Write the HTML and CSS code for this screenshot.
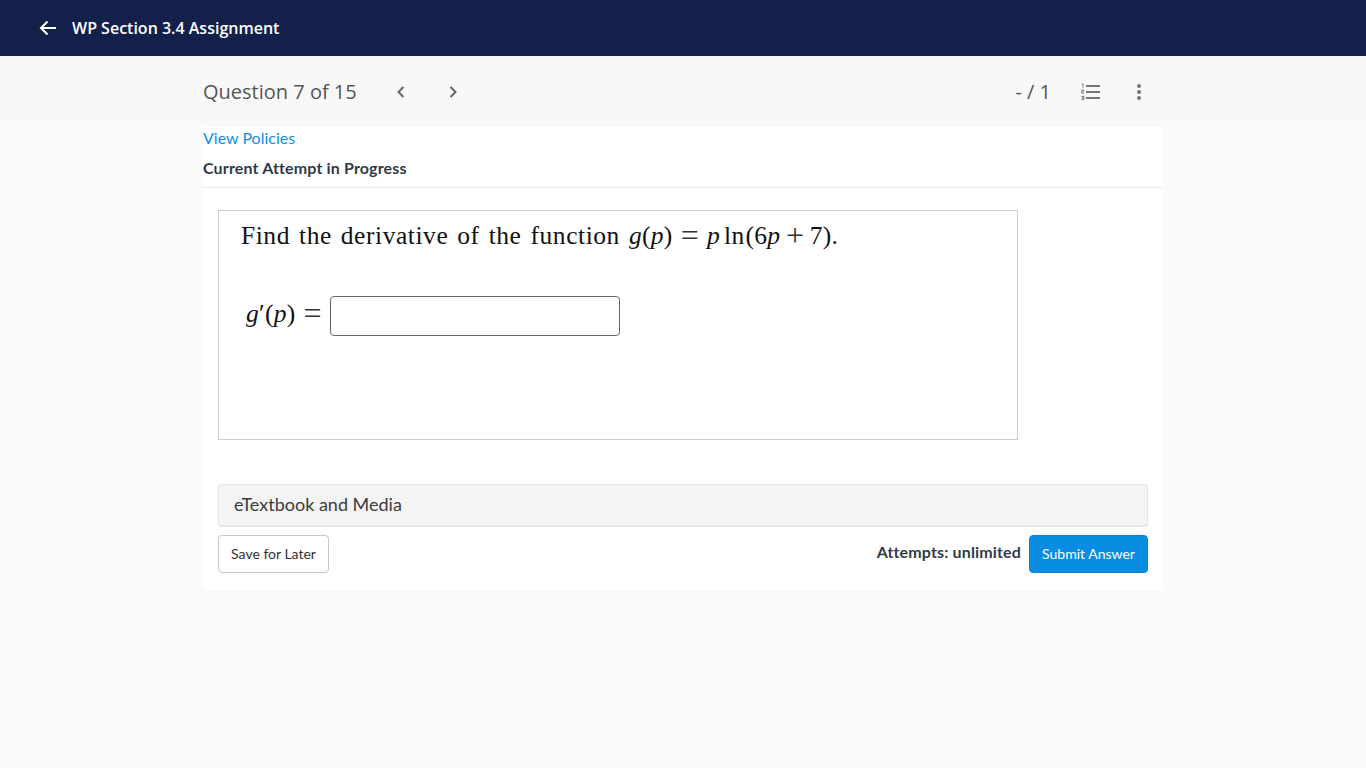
FILE: index.html
```html
<html lang="en">
<head>
  <meta charset="UTF-8">
  <meta name="viewport" content="width=device-width, initial-scale=1.0">
  <title>WP Section 3.4 Assignment</title>
  <link rel="stylesheet" href="styles.css">
</head>
<body>
  <div class="topbar">
    <svg class="backarrow" width="18" height="16" viewBox="0 0 18 16"><path d="M17 8H2M8.5 1.5L2 8l6.5 6.5" fill="none" stroke="#fff" stroke-width="2"/></svg>
    <div class="toptitle">WP Section 3.4 Assignment</div>
  </div>
  <div class="subbar">
    <div class="subinner">
      <div class="qcount">Question 7 of 15</div>
      <svg class="prev" width="10" height="14" viewBox="0 0 10 14"><path d="M7.5 2L2.5 7l5 5" fill="none" stroke="#666" stroke-width="2"/></svg>
      <svg class="next" width="10" height="14" viewBox="0 0 10 14"><path d="M2.5 2l5 5-5 5" fill="none" stroke="#666" stroke-width="2"/></svg>
      <div class="score">- / 1</div>
      <svg class="listicon" width="20" height="18" viewBox="0 0 20 18">
        <path d="M5 3h14M5 9h14M5 15h14" stroke="#757575" stroke-width="2"/>
        <path d="M.6 1.2l1.4-.6v4M.2 7h2.6v1.6H.6v1.6h2.4M.2 13.4h2.8v1.4H1.2h1.8v1.6H.2" fill="none" stroke="#757575" stroke-width=".9"/>
      </svg>
      <svg class="moreicon" width="6" height="18" viewBox="0 0 6 18"><circle cx="3" cy="3" r="2" fill="#757575"/><circle cx="3" cy="9" r="2" fill="#757575"/><circle cx="3" cy="15" r="2" fill="#757575"/></svg>
    </div>
  </div>
  <div class="card">
    <a class="policies" href="#">View Policies</a>
    <div class="attempt">Current Attempt in Progress</div>
    <div class="content">
      <div class="qbox">
        <div class="qtext">Find the derivative of the function <span class="math"><i>g</i>(<i>p</i>)<span class="rel">=</span><i>p</i><span class="fn">ln</span>(6<i>p</i><span class="rel small">+</span>7).</span></div>
        <div class="answer">
          <div class="answerlabel"><span class="math"><i>g</i>′(<i>p</i>)<span class="rel">=</span></span></div>
          <input class="answerinput" type="text">
        </div>
      </div>
      <div class="etext">eTextbook and Media</div>
      <div class="actions">
        <button class="savebtn">Save for Later</button>
        <div class="attemptsleft">Attempts: unlimited</div>
        <button class="submitbtn">Submit Answer</button>
      </div>
    </div>
  </div>
</body>
</html>
```
FILE: styles.css
```css
body {
  margin: 0;
  background-color: #fafafa;
  font-family: "Lato", sans-serif;
  color: #2f3b48;
}
.topbar {
  height: 56px;
  background-color: #13214a;
  display: flex;
  align-items: center;
  padding-left: 39px;
}
.backarrow { margin-right: 15px; }
.toptitle {
  font-family: "Open Sans", sans-serif;
  font-size: 16px;
  font-weight: 600;
  color: #fff;
}
.subbar {
  height: 71px;
  background-color: #f8f8f8;
}
.subinner {
  width: 960px;
  height: 71px;
  margin-left: 203px;
  display: flex;
  align-items: center;
}
.qcount {
  font-family: "Open Sans", sans-serif;
  font-size: 20px;
  color: #555;
  width: 193px;
}
.prev { margin-right: 42px; }
.score {
  font-family: "Open Sans", sans-serif;
  font-size: 20px;
  color: #555;
  margin-left: auto;
  margin-right: 30px;
}
.listicon { margin-right: 35px; }
.moreicon { margin-right: 21px; }
.card {
  width: 960px;
  height: 463px;
  margin-left: 203px;
  background-color: #fff;
}
.policies {
  display: block;
  font-size: 16px;
  line-height: 22px;
  color: #0d8fe3;
  text-decoration: none;
}
.attempt {
  font-size: 16px;
  font-weight: 700;
  letter-spacing: 0.15px;
  line-height: 20px;
  padding-top: 9px;
  padding-bottom: 9px;
  border-bottom: 1px solid #e8e8e8;
}
.content { padding: 22px 15px 0; }
.qbox {
  width: 798px;
  height: 228px;
  border: 1px solid #ccc;
  color: #111;
  font-family: "Liberation Serif", serif;
}
.qtext {
  font-size: 25.5px;
  line-height: 30px;
  padding: 10px 0 0 22px;
  letter-spacing: 0.55px;
  word-spacing: 2.1px;
  white-space: nowrap;
}
.math { letter-spacing: 0.3px; }
.rel {
  font-size: 32px;
  line-height: 0;
  font-weight: 400;
  margin: 0 8px;
  vertical-align: -2px;
  color: #333;
}
.small { margin: 0 5.5px; }
.fn { margin: 0 1px 0 4px; }
.answer {
  display: flex;
  align-items: center;
  margin-top: 45px;
  padding-left: 27px;
}
.answerlabel {
  font-size: 25.5px;
  line-height: 30px;
  width: 84px;
  margin-top: -5px;
  white-space: nowrap;
}
.answerinput {
  width: 290px;
  height: 40px;
  box-sizing: border-box;
  border: 1.5px solid #666;
  border-radius: 4px;
  background-color: #fff;
}
.etext {
  width: 930px;
  height: 42px;
  box-sizing: border-box;
  margin-top: 44px;
  padding-left: 15px;
  line-height: 38px;
  font-size: 18px;
  color: #3c3c3c;
  background-color: #f4f4f4;
  border: 1px solid #e6e6e6;
  border-radius: 3px;
  box-shadow: 0 1px 1px rgba(0, 0, 0, 0.1);
}
.actions {
  width: 930px;
  display: flex;
  align-items: center;
  margin-top: 9px;
}
.savebtn {
  width: 111px;
  height: 38px;
  padding-bottom: 3px;
  font-family: "Lato", sans-serif;
  font-size: 14px;
  color: #333;
  background-color: #fff;
  border: 1px solid #c8c8c8;
  border-radius: 4px;
}
.attemptsleft {
  margin-left: auto;
  margin-right: 8px;
  margin-top: -5px;
  font-size: 16px;
  font-weight: 700;
  letter-spacing: 0.15px;
}
.submitbtn {
  width: 119px;
  height: 38px;
  padding-bottom: 3px;
  font-family: "Lato", sans-serif;
  font-size: 14px;
  color: #fff;
  background-color: #088de2;
  border: 1px solid #0b84d2;
  border-radius: 4px;
}
```
